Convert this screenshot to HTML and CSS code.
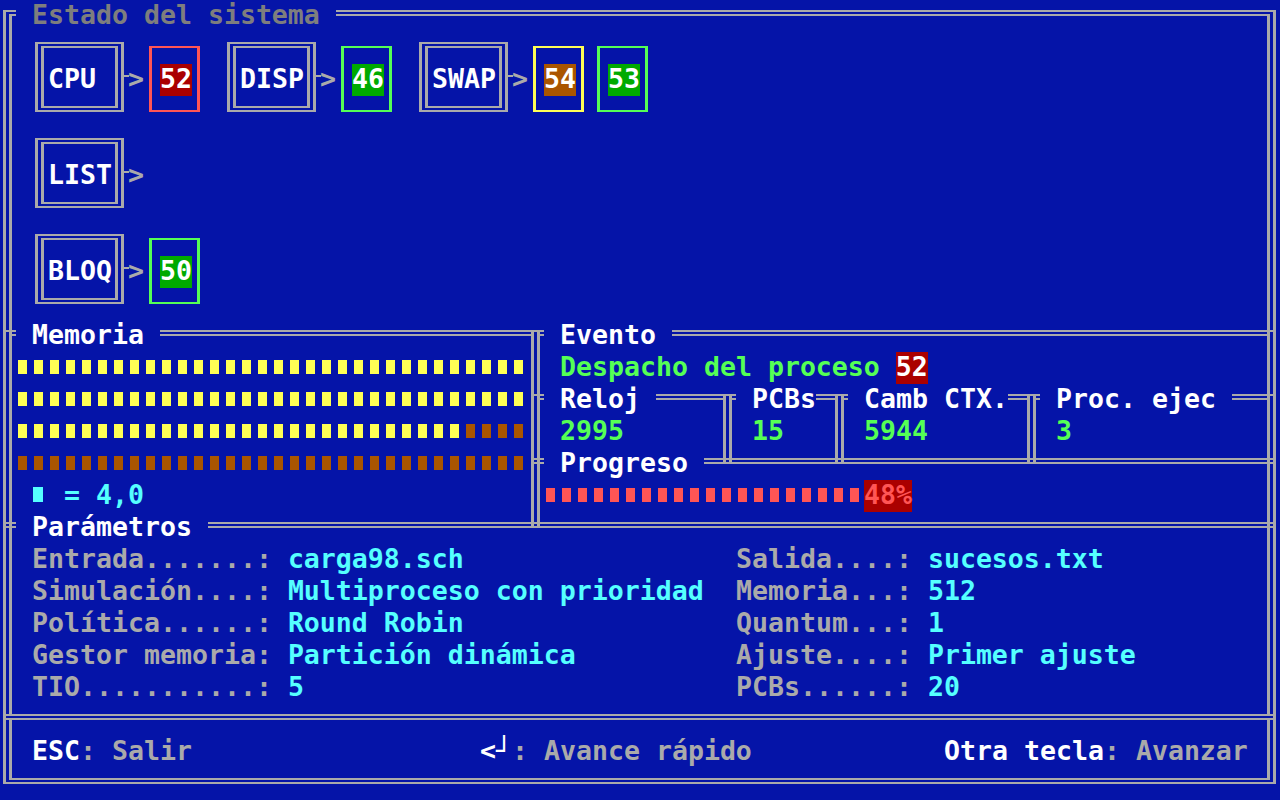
FILE: index.html
```html
<!DOCTYPE html>
<html lang="es">
<head>
<meta charset="utf-8">
<title>Estado del sistema</title>
<link rel="stylesheet" href="styles.css">
</head>
<body>
<main class="screen">
  <div class="dbox frame-main"></div>
  <div class="dbox frame-footer"></div>
  <div class="dbox frame-mem"></div>
  <div class="dbox frame-evt"></div>
  <div class="dbox stat stat-reloj">2995</div>
  <div class="dbox stat stat-pcbs">15</div>
  <div class="dbox stat stat-ctx">5944</div>
  <div class="dbox stat stat-proc">3</div>
  <div class="dbox frame-prog"></div>
  <div class="dbox frame-params"></div>

  <div class="dbox queue q-cpu">CPU</div>
  <div class="dbox queue q-disp">DISP</div>
  <div class="dbox queue q-swap">SWAP</div>
  <div class="dbox queue q-list">LIST</div>
  <div class="dbox queue q-bloq">BLOQ</div>

  <span class="arrow a-cpu">&gt;</span>
  <span class="arrow a-disp">&gt;</span>
  <span class="arrow a-swap">&gt;</span>
  <span class="arrow a-list">&gt;</span>
  <span class="arrow a-bloq">&gt;</span>

  <div class="sbox b-red p-52"><span class="pid bg-red">52</span></div>
  <div class="sbox b-green p-46"><span class="pid bg-green">46</span></div>
  <div class="sbox b-yellow p-54"><span class="pid bg-brown">54</span></div>
  <div class="sbox b-green p-53"><span class="pid bg-green">53</span></div>
  <div class="sbox b-green p-50"><span class="pid bg-green">50</span></div>

  <h1 class="title t-estado"> Estado del sistema </h1>
  <h2 class="title t-mem"> Memoria </h2>
  <h2 class="title t-evt"> Evento </h2>
  <h3 class="title t-reloj"> Reloj </h3>
  <h3 class="title t-pcbs"> PCBs</h3>
  <h3 class="title t-ctx"> Camb CTX.</h3>
  <h3 class="title t-proc"> Proc. ejec </h3>
  <h2 class="title t-prog"> Progreso </h2>
  <h2 class="title t-params"> Parámetros </h2>

  <div class="event-msg">Despacho del proceso <span class="pid bg-red">52</span></div>

  <div class="mem-map">
    <i class="u"></i><i class="u"></i><i class="u"></i><i class="u"></i><i class="u"></i><i class="u"></i><i class="u"></i><i class="u"></i>
    <i class="u"></i><i class="u"></i><i class="u"></i><i class="u"></i><i class="u"></i><i class="u"></i><i class="u"></i><i class="u"></i>
    <i class="u"></i><i class="u"></i><i class="u"></i><i class="u"></i><i class="u"></i><i class="u"></i><i class="u"></i><i class="u"></i>
    <i class="u"></i><i class="u"></i><i class="u"></i><i class="u"></i><i class="u"></i><i class="u"></i><i class="u"></i><i class="u"></i>

    <i class="u"></i><i class="u"></i><i class="u"></i><i class="u"></i><i class="u"></i><i class="u"></i><i class="u"></i><i class="u"></i>
    <i class="u"></i><i class="u"></i><i class="u"></i><i class="u"></i><i class="u"></i><i class="u"></i><i class="u"></i><i class="u"></i>
    <i class="u"></i><i class="u"></i><i class="u"></i><i class="u"></i><i class="u"></i><i class="u"></i><i class="u"></i><i class="u"></i>
    <i class="u"></i><i class="u"></i><i class="u"></i><i class="u"></i><i class="u"></i><i class="u"></i><i class="u"></i><i class="u"></i>

    <i class="u"></i><i class="u"></i><i class="u"></i><i class="u"></i><i class="u"></i><i class="u"></i><i class="u"></i><i class="u"></i>
    <i class="u"></i><i class="u"></i><i class="u"></i><i class="u"></i><i class="u"></i><i class="u"></i><i class="u"></i><i class="u"></i>
    <i class="u"></i><i class="u"></i><i class="u"></i><i class="u"></i><i class="u"></i><i class="u"></i><i class="u"></i><i class="u"></i>
    <i class="u"></i><i class="u"></i><i class="u"></i><i class="u"></i><i class="f"></i><i class="f"></i><i class="f"></i><i class="f"></i>

    <i class="f"></i><i class="f"></i><i class="f"></i><i class="f"></i><i class="f"></i><i class="f"></i><i class="f"></i><i class="f"></i>
    <i class="f"></i><i class="f"></i><i class="f"></i><i class="f"></i><i class="f"></i><i class="f"></i><i class="f"></i><i class="f"></i>
    <i class="f"></i><i class="f"></i><i class="f"></i><i class="f"></i><i class="f"></i><i class="f"></i><i class="f"></i><i class="f"></i>
    <i class="f"></i><i class="f"></i><i class="f"></i><i class="f"></i><i class="f"></i><i class="f"></i><i class="f"></i><i class="f"></i>
  </div>
  <div class="mem-legend"><i class="sq-c"></i> = 4,0</div>

  <div class="progress">
    <i></i><i></i><i></i><i></i><i></i><i></i><i></i><i></i><i></i><i></i>
    <i></i><i></i><i></i><i></i><i></i><i></i><i></i><i></i><i></i><i></i>
    <span class="pct">48%</span>
  </div>

  <div class="params">
    <div><span class="lbl">Entrada.......: </span><span class="val">carga98.sch</span></div>
    <div><span class="lbl">Salida....: </span><span class="val">sucesos.txt</span></div>
    <div><span class="lbl">Simulación....: </span><span class="val">Multiproceso con prioridad</span></div>
    <div><span class="lbl">Memoria...: </span><span class="val">512</span></div>
    <div><span class="lbl">Política......: </span><span class="val">Round Robin</span></div>
    <div><span class="lbl">Quantum...: </span><span class="val">1</span></div>
    <div><span class="lbl">Gestor memoria: </span><span class="val">Partición dinámica</span></div>
    <div><span class="lbl">Ajuste....: </span><span class="val">Primer ajuste</span></div>
    <div><span class="lbl">TIO...........: </span><span class="val">5</span></div>
    <div><span class="lbl">PCBs......: </span><span class="val">20</span></div>
  </div>

  <footer class="keys">
    <div><span class="k">ESC</span>: Salir</div>
    <div><span class="k">&lt;┘</span>: Avance rápido</div>
    <div><span class="k">Otra tecla</span>: Avanzar</div>
  </footer>
</main>
</body>
</html>
```

FILE: styles.css
```css
* { box-sizing: border-box; margin: 0; padding: 0; }
html, body { background: #0514a8; }
body { width: 1280px; height: 800px; overflow: hidden; }

.screen {
  display: grid;
  grid-template-columns: repeat(80, 16px);
  grid-template-rows: repeat(25, 32px);
  width: 1280px;
  height: 800px;
  font-family: "DejaVu Sans Mono", monospace;
  font-size: 26.576px;
  line-height: 30px;
  font-weight: 700;
  color: #aaaaaa;
}

/* double-line boxes (═ ║) */
.dbox {
  border: 0 double #aaaaaa;
  border-width: 6px 9px;
  margin: 10px 4px 16px 3px;
}
.frame-main   { grid-area: 1 / 1 / 24 / 81; }
.frame-footer { grid-area: 23 / 1 / 26 / 81; }
.frame-mem    { grid-area: 11 / 1 / 18 / 35; }
.frame-evt    { grid-area: 11 / 34 / 18 / 81; }
.frame-prog   { grid-area: 15 / 34 / 18 / 81; }
.frame-params { grid-area: 17 / 1 / 24 / 81; }

.stat { padding: 16px 0 0 20px; color: #55ff55; white-space: pre; }
.stat-reloj { grid-area: 13 / 34 / 16 / 47; }
.stat-pcbs  { grid-area: 13 / 46 / 16 / 54; }
.stat-ctx   { grid-area: 13 / 53 / 16 / 66; }
.stat-proc  { grid-area: 13 / 65 / 16 / 81; }

.queue { padding: 16px 0 0 4px; color: #ffffff; white-space: pre; }
.q-cpu  { grid-area: 2 / 3 / 5 / 9; }
.q-disp { grid-area: 2 / 15 / 5 / 21; }
.q-swap { grid-area: 2 / 27 / 5 / 33; }
.q-list { grid-area: 5 / 3 / 8 / 9; }
.q-bloq { grid-area: 8 / 3 / 11 / 9; }

/* connector  ╟─> */
.arrow {
  padding-left: 16px;
  color: #aaaaaa;
  background: linear-gradient(#aaaaaa, #aaaaaa) 12px 11px / 5px 2px no-repeat;
}
.a-cpu  { grid-area: 3 / 8 / 4 / 10; }
.a-disp { grid-area: 3 / 20 / 4 / 22; }
.a-swap { grid-area: 3 / 32 / 4 / 34; }
.a-list { grid-area: 6 / 8 / 7 / 10; }
.a-bloq { grid-area: 9 / 8 / 10 / 10; }

/* single-line process boxes (┌─┐) */
.sbox {
  border: 0 solid;
  border-width: 2px 3px;
  margin: 14px 8px 16px 5px;
  padding: 16px 0 0 8px;
  display: flex;
  align-items: flex-start;
}
.p-52 { grid-area: 2 / 10 / 5 / 14; }
.p-46 { grid-area: 2 / 22 / 5 / 26; }
.p-54 { grid-area: 2 / 34 / 5 / 38; }
.p-53 { grid-area: 2 / 38 / 5 / 42; }
.p-50 { grid-area: 8 / 10 / 11 / 14; }

.b-red    { border-color: #ff5555; }
.b-green  { border-color: #55ff55; }
.b-yellow { border-color: #ffff55; }

.pid { display: block; padding-bottom: 2px; color: #ffffff; }
.bg-red   { background: #aa0000; }
.bg-green { background: #00aa00; }
.bg-brown { background: #aa5500; }

/* section titles that interrupt the frame lines */
.title {
  background: #0514a8;
  color: #ffffff;
  font: inherit;
  white-space: pre;
}
.t-estado { grid-area: 1 / 2 / 2 / 22; color: #7e7e7e; }
.t-mem    { grid-area: 11 / 2 / 12 / 11; }
.t-evt    { grid-area: 11 / 35 / 12 / 43; }
.t-reloj  { grid-area: 13 / 35 / 14 / 42; }
.t-pcbs   { grid-area: 13 / 47 / 14 / 52; }
.t-ctx    { grid-area: 13 / 54 / 14 / 64; }
.t-proc   { grid-area: 13 / 66 / 14 / 78; }
.t-prog   { grid-area: 15 / 35 / 16 / 45; }
.t-params { grid-area: 17 / 2 / 18 / 14; }

.event-msg {
  grid-area: 12 / 36 / 13 / 81;
  display: flex;
  align-items: flex-start;
  color: #55ff55;
  white-space: pre;
}

/* memory map */
.mem-map {
  grid-area: 12 / 2 / 16 / 34;
  display: grid;
  grid-template-columns: repeat(32, 16px);
  grid-template-rows: repeat(4, 32px);
}
.mem-map i { display: block; margin: 8px 5px 10px 2px; }
.mem-map .u { background: #ffff55; }
.mem-map .f { background: #aa5500; }

.mem-legend {
  grid-area: 16 / 3 / 17 / 12;
  display: flex;
  align-items: flex-start;
  color: #55ffff;
  white-space: pre;
}
.sq-c {
  display: block;
  flex: none;
  width: 10px;
  height: 15px;
  margin: 7px 5px 0 1px;
  background: #55ffff;
}

/* progress bar */
.progress {
  grid-area: 16 / 35 / 17 / 58;
  display: flex;
  align-items: flex-start;
}
.progress i {
  display: block;
  flex: none;
  width: 9px;
  height: 14px;
  margin: 8px 5px 0 2px;
  background: #ff5555;
}
.pct {
  display: block;
  padding-bottom: 2px;
  background: #aa0000;
  color: #ff5555;
  white-space: pre;
}

/* parameters */
.params {
  grid-area: 18 / 3 / 23 / 81;
  display: grid;
  grid-template-columns: 704px 1fr;
  grid-auto-rows: 32px;
  white-space: pre;
}
.lbl { color: #aaaaaa; }
.val { color: #55ffff; }

/* footer keys */
.keys {
  grid-area: 24 / 3 / 25 / 80;
  display: grid;
  grid-template-columns: 448px 464px auto;
  color: #aaaaaa;
  white-space: pre;
}
.k { color: #ffffff; }
```
